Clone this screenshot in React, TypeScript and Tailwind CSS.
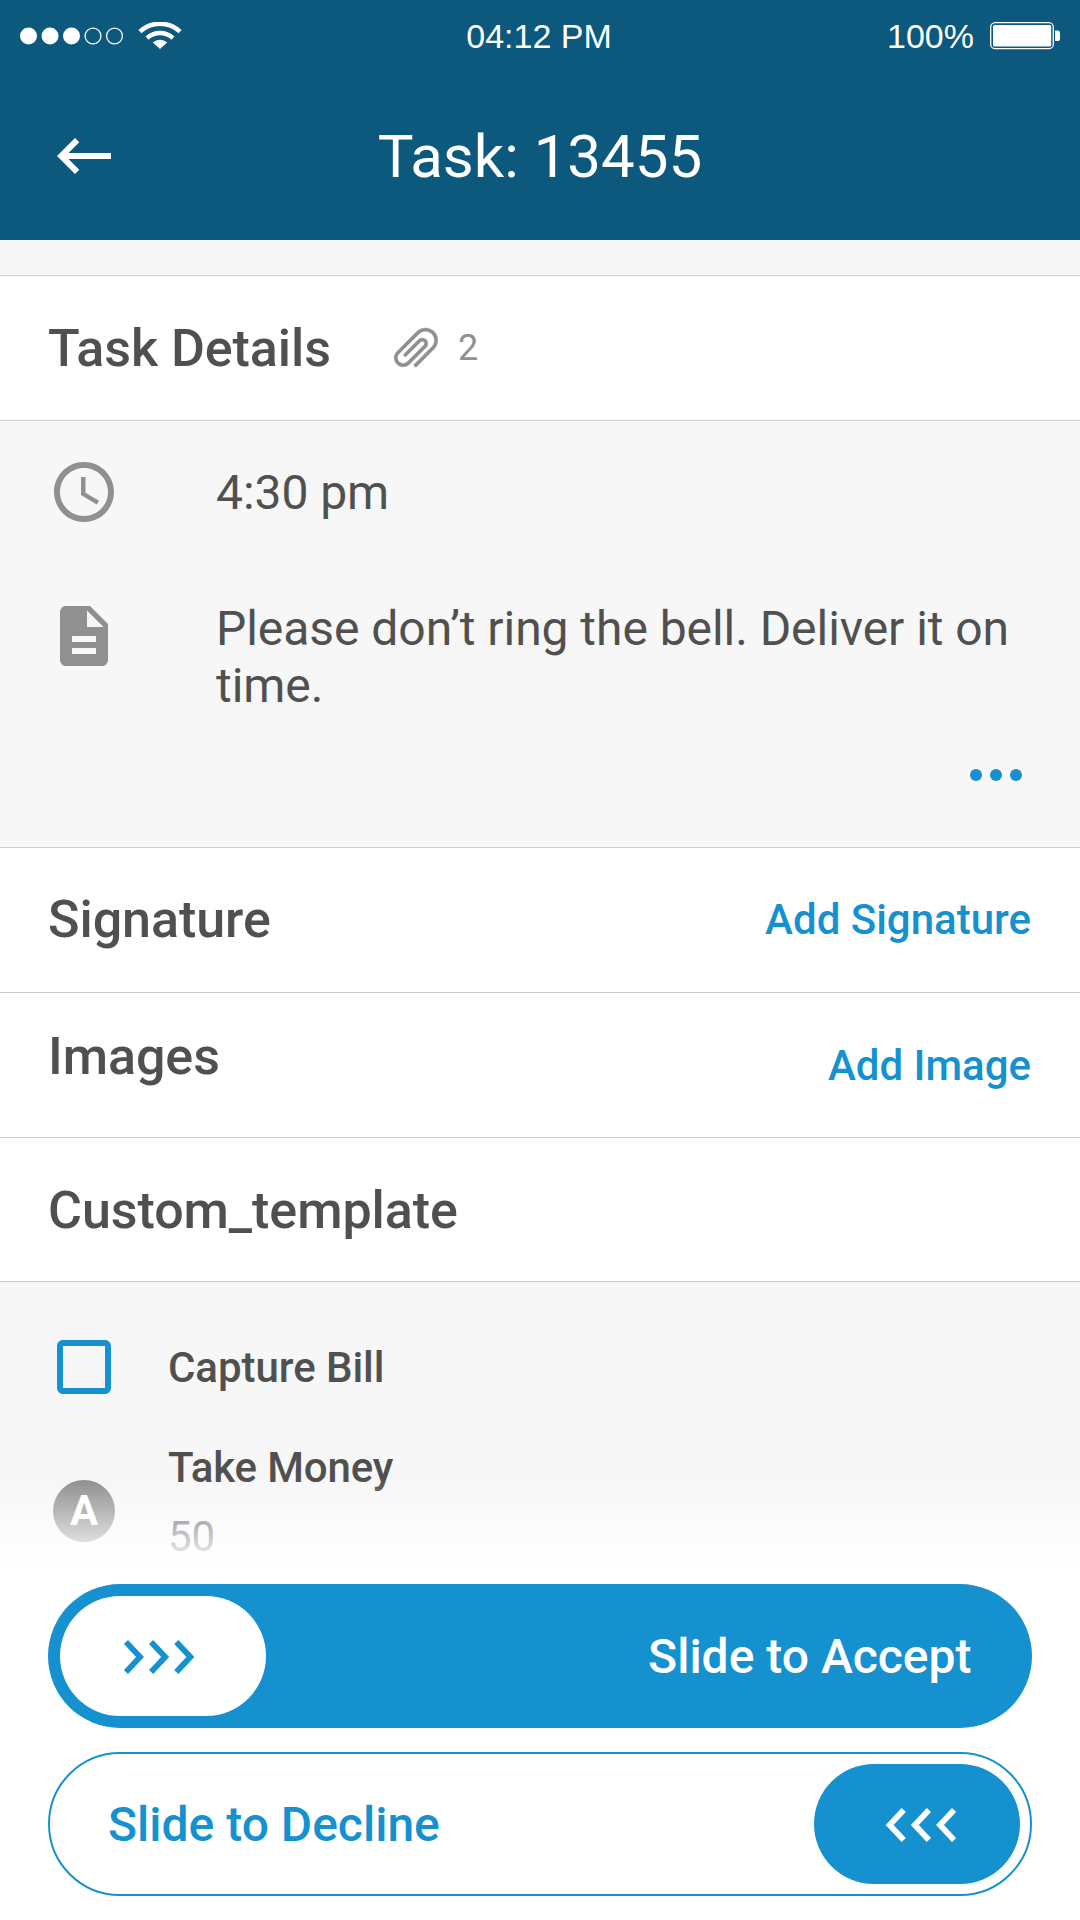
import React from "react";

function MaterialIcon({ d, className }: { d: string; className: string }) {
  return (
    <svg viewBox="0 0 24 24" className={`size-[72px] shrink-0 ${className}`} fill="currentColor">
      <path d={d} />
    </svg>
  );
}

const ICONS = {
  back: "M21 11H6.83l3.58-3.59L9 6l-6 6 6 6 1.41-1.41L6.83 13H21z",
  clock:
    "M11.99 2C6.47 2 2 6.48 2 12s4.47 10 9.99 10C17.52 22 22 17.52 22 12S17.52 2 11.99 2zM12 20c-4.42 0-8-3.58-8-8s3.58-8 8-8 8 3.58 8 8-3.58 8-8 8zM12.5 7H11v6l5.25 3.15.75-1.23-4.5-2.67z",
  note: "M14 2H6c-1.1 0-1.99.9-1.99 2L4 20c0 1.1.89 2 1.99 2H18c1.1 0 2-.9 2-2V8l-6-6zm2 16H8v-2h8v2zm0-4H8v-2h8v2zm-3-5V3.5L18.5 9H13z",
  checkbox:
    "M19 5v14H5V5h14m0-2H5c-1.1 0-2 .9-2 2v14c0 1.1.9 2 2 2h14c1.1 0 2-.9 2-2V5c0-1.1-.9-2-2-2z",
};

function SignalDots() {
  return (
    <svg width="104" height="18" viewBox="0 0 104 18">
      {[0, 1, 2].map((i) => (
        <circle key={i} cx={8.5 + i * 21.5} cy="9" r="8.5" fill="#fff" />
      ))}
      {[3, 4].map((i) => (
        <circle key={i} cx={8.5 + i * 21.5} cy="9" r="7.9" fill="none" stroke="#fff" strokeWidth="1.3" />
      ))}
    </svg>
  );
}

function Wifi() {
  return (
    <svg width="44" height="28" viewBox="0 0 44 28" fill="none" stroke="#fff" strokeWidth="4.4">
      <path d="M1.9 9.6A29.5 29.5 0 0 1 42.1 9.6" />
      <path d="M9 16.2A19 19 0 0 1 35 16.2" />
      <path d="M14.8 20.6A10.5 10.5 0 0 1 29.2 20.6L22 27.1z" fill="#fff" stroke="none" />
    </svg>
  );
}

function Battery() {
  return (
    <svg width="70" height="28" viewBox="0 0 70 28">
      <rect x="0.7" y="0.7" width="62.6" height="26" rx="4.5" fill="none" stroke="#fff" strokeWidth="1.3" />
      <rect x="3" y="3" width="58.2" height="21.5" rx="1.6" fill="#fff" />
      <path d="M65 8.5h2.4a2.6 2.6 0 0 1 2.6 2.6v5.4a2.6 2.6 0 0 1-2.6 2.6H65z" fill="#fff" />
    </svg>
  );
}

function Paperclip() {
  return (
    <svg width="46" height="44" viewBox="0 0 46 44" fill="#909090" stroke="#909090">
      <path
        strokeWidth="0.15"
        transform="matrix(1.591 1.591 1.591 -1.591 -14.3 21.3)"
        d="M16.5 6v11.5c0 2.21-1.79 4-4 4s-4-1.79-4-4V5a2.5 2.5 0 0 1 5 0v10.5c0 .55-.45 1-1 1s-1-.45-1-1V6H10v9.5a2.5 2.5 0 0 0 5 0V5c0-2.21-1.79-4-4-4S7 2.79 7 5v12.5c0 3.04 2.46 5.5 5.5 5.5s5.5-2.46 5.5-5.5V6h-1.5z"
      />
    </svg>
  );
}

function Chevrons({ className }: { className: string }) {
  return (
    <svg width="72" height="36" viewBox="0 0 72 36" fill="none" strokeWidth="5.8" className={className}>
      <path d="M1.9 2.9L16 18L1.9 33.1" stroke="currentColor" />
      <path d="M27.1 2.9L41.2 18L27.1 33.1" stroke="currentColor" />
      <path d="M52.3 2.9L66.4 18L52.3 33.1" stroke="currentColor" />
    </svg>
  );
}

function SectionRow({
  title,
  action,
  rowClass,
  titleClass = "",
  children,
}: {
  title: string;
  action?: string;
  rowClass: string;
  titleClass?: string;
  children?: React.ReactNode;
}) {
  return (
    <section className={`flex items-center border-t border-[#cccccc] bg-white px-12 ${rowClass}`}>
      <h2 className={`text-[52px] leading-[60px] font-medium ${titleClass}`}>{title}</h2>
      {children}
      {action && (
        <button className="mr-px ml-auto text-[42px] leading-[50px] font-medium tracking-normal text-[#1691cf]">
          {action}
        </button>
      )}
    </section>
  );
}

export default function App() {
  return (
    <div className="flex h-[1920px] w-[1080px] flex-col overflow-hidden bg-white font-['Roboto',sans-serif] text-[#505050]">
      <header className="flex h-[240px] shrink-0 flex-col bg-[#0d587d] text-white">
        <div className="grid h-[72px] grid-cols-3 items-center px-5 font-['Liberation_Sans',sans-serif] text-[34px]">
          <div className="flex items-center gap-[13.5px]">
            <SignalDots />
            <Wifi />
          </div>
          <span className="relative -left-px text-center">04:12 PM</span>
          <div className="flex items-center justify-end gap-4">
            <span>100%</span>
            <Battery />
          </div>
        </div>
        <div className="flex h-[168px] items-center px-12">
          <MaterialIcon d={ICONS.back} className="text-white" />
          <h1 className="flex-1 pt-0.5 text-center text-[60px] leading-[72px]">Task: 13455</h1>
          <div className="w-[72px]" />
        </div>
      </header>

      <main className="flex flex-col tracking-[-0.05px]">
        <div className="h-[35px] bg-[#f7f7f7]" />
        <SectionRow title="Task Details" rowClass="h-[145px] pt-0.5">
          <div className="ml-[61px] flex items-center gap-5 text-[36px] leading-[44px] text-[#909090]">
            <Paperclip />
            <span className="pb-0.5">2</span>
          </div>
        </SectionRow>

        <section className="flex h-[427px] flex-col border-t border-[#cccccc] bg-[#f7f7f7] px-12 pt-[35px] text-[48px] leading-[57px]">
          <div className="flex items-center gap-24">
            <MaterialIcon d={ICONS.clock} className="text-[#909090]" />
            <span>4:30 pm</span>
          </div>
          <div className="mt-[72px] flex items-start gap-24">
            <MaterialIcon d={ICONS.note} className="text-[#909090]" />
            <p className="w-[816px]">Please don’t ring the bell. Deliver it on time.</p>
          </div>
          <div className="mt-[55px] flex justify-end gap-2 pr-[10px]">
            <i className="size-3 rounded-full bg-[#1691cf]" />
            <i className="size-3 rounded-full bg-[#1691cf]" />
            <i className="size-3 rounded-full bg-[#1691cf]" />
          </div>
        </section>

        <SectionRow title="Signature" action="Add Signature" rowClass="h-[145px]" />
        <SectionRow title="Images" action="Add Image" rowClass="h-[145px] pt-0.5" titleClass="pb-[19px]" />
        <SectionRow title="Custom_template" rowClass="h-[144px] pt-0.5" />

        <section className="relative flex h-[303px] flex-col overflow-hidden border-t border-[#cccccc] bg-[#f7f7f7] px-12 pt-[49px] text-[42px] font-medium">
          <div className="flex items-center gap-12">
            <MaterialIcon d={ICONS.checkbox} className="text-[#1691cf]" />
            <span className="pt-0.5 leading-[50px]">Capture Bill</span>
          </div>
          <div className="mt-[31px] flex items-start leading-[68px]">
            <div className="mt-[46px] ml-[5px] flex size-[62px] items-center justify-center rounded-full bg-[#909090] font-bold text-white">
              A
            </div>
            <div className="ml-[53px]">
              <div className="tracking-[-0.15px]">Take Money</div>
              <div className="pt-px font-normal text-[#646464]">50</div>
            </div>
          </div>
          <div className="absolute inset-x-0 bottom-0 h-[104px] bg-linear-to-b from-white/0 to-white to-85%" />
        </section>
      </main>

      <footer className="flex flex-col gap-6 px-12 text-[48px] font-medium">
        <div className="flex h-36 items-center justify-between rounded-full bg-[#1691cf] pr-[60.5px] pl-3">
          <div className="flex h-[120px] w-[206px] items-center rounded-full bg-white pl-16 text-[#1691cf]">
            <Chevrons className="translate-y-px" />
          </div>
          <span className="leading-[57px] text-white">Slide to Accept</span>
        </div>
        <div className="flex h-36 items-center justify-between rounded-full border-2 border-[#1691cf] pr-[10px] pl-[58px]">
          <span className="leading-[57px] text-[#1691cf]">Slide to Decline</span>
          <div className="flex h-[120px] w-[206px] items-center justify-end rounded-full bg-[#1691cf] pr-16 text-white">
            <Chevrons className="translate-y-px rotate-180" />
          </div>
        </div>
      </footer>
    </div>
  );
}
